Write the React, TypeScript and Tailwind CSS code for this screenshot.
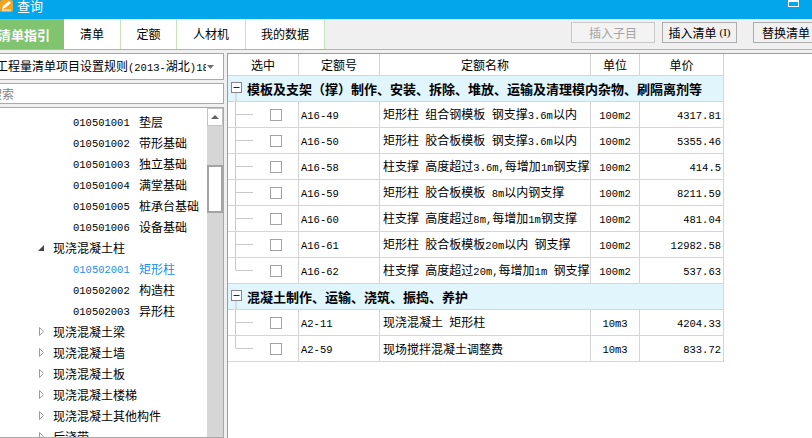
import React from "react";

const group1 = [
    ["A16-49", "矩形柱 组合钢模板 钢支撑3.6m以内", "100m2", "4317.81"],
    ["A16-50", "矩形柱 胶合板模板 钢支撑3.6m以内", "100m2", "5355.46"],
    ["A16-58", "柱支撑 高度超过3.6m,每增加1m钢支撑", "100m2", "414.5"],
    ["A16-59", "矩形柱 胶合板模板 8m以内钢支撑", "100m2", "8211.59"],
    ["A16-60", "柱支撑 高度超过8m,每增加1m钢支撑", "100m2", "481.04"],
    ["A16-61", "矩形柱 胶合板模板20m以内 钢支撑", "100m2", "12982.58"],
    ["A16-62", "柱支撑 高度超过20m,每增加1m 钢支撑", "100m2", "537.63"],
];

const group2 = [
    ["A2-11", "现浇混凝土 矩形柱", "10m3", "4204.33"],
    ["A2-59", "现场搅拌混凝土调整费", "10m3", "833.72"],
];

type TreeItem = { code?: string; name: string; open?: boolean; active?: boolean };

const treeItems: TreeItem[] = [
    { code: "010501001", name: "垫层" },
    { code: "010501002", name: "带形基础" },
    { code: "010501003", name: "独立基础" },
    { code: "010501004", name: "满堂基础" },
    { code: "010501005", name: "桩承台基础" },
    { code: "010501006", name: "设备基础" },
    { name: "现浇混凝土柱", open: true },
    { code: "010502001", name: "矩形柱", active: true },
    { code: "010502002", name: "构造柱" },
    { code: "010502003", name: "异形柱" },
    { name: "现浇混凝土梁" },
    { name: "现浇混凝土墙" },
    { name: "现浇混凝土板" },
    { name: "现浇混凝土楼梯" },
    { name: "现浇混凝土其他构件" },
    { name: "后浇带" },
];

// ascii runs get the narrow mono font, like the half-width glyphs of the original
const Mixed = ({ text }: { text: string }) => {
    const parts = text.split(/([\x20-\x7e]+)/).filter(Boolean);
    return (
        <span className="whitespace-pre">
            {parts.map((p, i) =>
                /^[\x20-\x7e]+$/.test(p) ? (
                    <span key={i} className="font-['Liberation_Mono',monospace] text-[10.5px]">{p}</span>
                ) : (
                    <span key={i}>{p}</span>
                )
            )}
        </span>
    );
};

const TitleBar = () => (
    <div className="h-[19px] shrink-0 bg-[#03a6ea] flex overflow-hidden">
        <svg width="13" height="12" viewBox="0 0 13 12" className="shrink-0">
            <rect x="0" y="0" width="13" height="12" rx="2" fill="#f7a21b" />
            <path d="M2 9 L3 6 L9 1 L11 3 L5 8 Z" fill="#fff" />
            <path d="M2 10 H11" stroke="#fff" strokeWidth="1" />
        </svg>
        <span className="ml-[4px] -mt-[2px] text-white text-[13px] leading-[16px]">查询</span>
        <div className="ml-auto mr-[13px] w-[11px] h-[7px] border border-white border-t-2" />
    </div>
);

const TabStrip = () => (
    <div className="h-[31px] shrink-0 flex border-b border-[#8ccf7c] bg-[#f0f0f0]">
        <div className="w-[64px] shrink-0 bg-[#80c46f] text-white font-bold text-[13px] flex items-center">
            <span className="-ml-[2px] whitespace-nowrap">清单指引</span>
        </div>
        <div className="w-[57px] shrink-0 bg-white border-r border-[#c6e6b9] flex items-center justify-center">清单</div>
        <div className="w-[56px] shrink-0 bg-white border-r border-[#c6e6b9] flex items-center justify-center">定额</div>
        <div className="w-[69px] shrink-0 bg-white border-r border-[#c6e6b9] flex items-center justify-center">人材机</div>
        <div className="w-[79px] shrink-0 bg-white border-r border-[#c6e6b9] flex items-center justify-center">我的数据</div>
        <button className="ml-[246px] mt-[3px] w-[84px] h-[21px] shrink-0 border border-[#c8c8c8] bg-[#f3f3f3] text-[#a3a3a3] text-[12px]">
            插入子目
        </button>
        <button className="ml-[7px] mt-[3px] w-[75px] h-[21px] shrink-0 border border-[#adadad] bg-[#f1f1f1] text-[12px] flex items-center justify-center">
            插入清单<span className="ml-[3px] font-['Liberation_Serif',serif] text-[11px]">(I)</span>
        </button>
        <button className="ml-[16px] mt-[3px] w-[62px] h-[21px] shrink-0 border border-[#adadad] border-r-0 bg-[#f1f1f1] text-[12px] text-left pl-[8px] whitespace-nowrap">
            替换清单
        </button>
    </div>
);

const LeftPanel = () => (
    <div className="w-[227px] -ml-[3px] shrink-0 flex flex-col gap-[3px]">
        <div className="h-[27px] shrink-0 border border-[#a9a9a9] bg-white flex items-center overflow-hidden">
            <span className="-ml-[2px] whitespace-nowrap overflow-hidden w-[210px]">
                工程量清单项目设置规则<Mixed text="(2013-" />湖北<Mixed text=")185" />
            </span>
            <svg width="7" height="4" viewBox="0 0 7 4" className="ml-[1px]">
                <path d="M0 0 H7 L3.5 4 Z" fill="#6e6e6e" />
            </svg>
        </div>
        <div className="h-[21px] shrink-0 border border-[#a9a9a9] bg-white flex items-center overflow-hidden">
            <span className="-ml-[8px] text-[#858585] whitespace-nowrap">搜索</span>
        </div>
        <div className="flex-1 min-h-0 border border-[#a9a9a9] bg-white flex overflow-hidden">
            <div className="flex-1 pt-[3px]">
                {treeItems.map((t, i) =>
                    t.code ? (
                        <div key={i} className={`h-[21px] flex items-center pl-[75px] whitespace-nowrap ${t.active ? "text-[#1b8cf0]" : ""}`}>
                            <span className="w-[66px] shrink-0"><Mixed text={t.code} /></span>
                            <span>{t.name}</span>
                        </div>
                    ) : (
                        <div key={i} className="h-[21px] flex items-center pl-[40px] whitespace-nowrap">
                            {t.open ? (
                                <svg width="8" height="9" viewBox="0 0 8 9" className="shrink-0">
                                    <path d="M6 2 V8 H0 Z" fill="#454545" />
                                </svg>
                            ) : (
                                <svg width="8" height="9" viewBox="0 0 8 9" className="shrink-0">
                                    <path d="M1.5 0.5 L5.5 4.5 L1.5 8.5 Z" fill="#fff" stroke="#9a9a9a" />
                                </svg>
                            )}
                            <span className="ml-[7px]">{t.name}</span>
                        </div>
                    )
                )}
            </div>
            <div className="w-[16px] shrink-0 bg-[#d6d6d6] flex flex-col">
                <div className="h-[18px] bg-white border border-[#c4c4c4] flex items-center justify-center">
                    <svg width="8" height="4" viewBox="0 0 8 4">
                        <path d="M0 4 L4 0 L8 4 Z" fill="#5f6368" />
                    </svg>
                </div>
                <div className="h-[39px]" />
                <div className="h-[48px] bg-white border-2 border-[#a4a4a4]" />
            </div>
        </div>
    </div>
);

const cols = "grid grid-cols-[71px_81px_211px_49px_84px]";
const cell = "border-r border-b border-[#d5d5d5] flex items-center overflow-hidden whitespace-nowrap";

const GroupRow = ({ title }: { title: string }) => (
    <div className="h-[26px] w-[496px] bg-[#e1f5fc] border-r border-b border-[#d5d5d5] flex items-center">
        <svg width="20" height="25" viewBox="0 0 20 25" className="shrink-0">
            <line x1="8" y1="17" x2="8" y2="25" stroke="#c8c8c8" />
            <rect x="3.5" y="6.5" width="10" height="10" fill="#fff" stroke="#858585" />
            <line x1="5.5" y1="11.5" x2="11.5" y2="11.5" stroke="#222" />
        </svg>
        <span className="-ml-[1px] font-bold text-[13px] whitespace-nowrap">{title}</span>
    </div>
);

const DataRow = ({ row, last }: { row: string[]; last: boolean }) => (
    <div className={`${cols} h-[26px]`}>
        <div className={cell}>
            <svg width="26" height="25" viewBox="0 0 26 25" className="shrink-0">
                <line x1="7.5" y1="0" x2="7.5" y2={last ? 12.5 : 25} stroke="#c8c8c8" />
                <line x1="8" y1="12.5" x2="25" y2="12.5" stroke="#c8c8c8" />
            </svg>
            <span className="ml-[16px] w-[12px] h-[12px] shrink-0 border border-[#a3a3a3] bg-white" />
        </div>
        <div className={`${cell} pl-[2px]`}><Mixed text={row[0]} /></div>
        <div className={`${cell} pl-[3px]`}><Mixed text={row[1]} /></div>
        <div className={`${cell} justify-center`}><Mixed text={row[2]} /></div>
        <div className={`${cell} justify-end pr-[2px]`}><Mixed text={row[3]} /></div>
    </div>
);

const RightPanel = () => (
    <div className="flex-1 bg-white border-l border-t border-[#9c9c9c]">
        <div className={`${cols} h-[22px]`}>
            {["选中", "定额号", "定额名称", "单位", "单价"].map((h) => (
                <div key={h} className={`${cell} justify-center`}>{h}</div>
            ))}
        </div>
        <GroupRow title="模板及支架（撑）制作、安装、拆除、堆放、运输及清理模内杂物、刷隔离剂等" />
        {group1.map((r, i) => (
            <DataRow key={r[0]} row={r} last={i === group1.length - 1} />
        ))}
        <GroupRow title="混凝土制作、运输、浇筑、振捣、养护" />
        {group2.map((r, i) => (
            <DataRow key={r[0]} row={r} last={i === group2.length - 1} />
        ))}
    </div>
);

export default function App() {
    return (
        <div className="w-[812px] h-[438px] overflow-hidden bg-[#f0f0f0] flex flex-col font-['Noto_Sans_CJK_SC',sans-serif] text-[12px] leading-none text-black">
            <TitleBar />
            <TabStrip />
            <div className="h-[3px] shrink-0" />
            <div className="flex flex-1 min-h-0">
                <LeftPanel />
                <div className="w-[3px] shrink-0" />
                <RightPanel />
            </div>
        </div>
    );
}
